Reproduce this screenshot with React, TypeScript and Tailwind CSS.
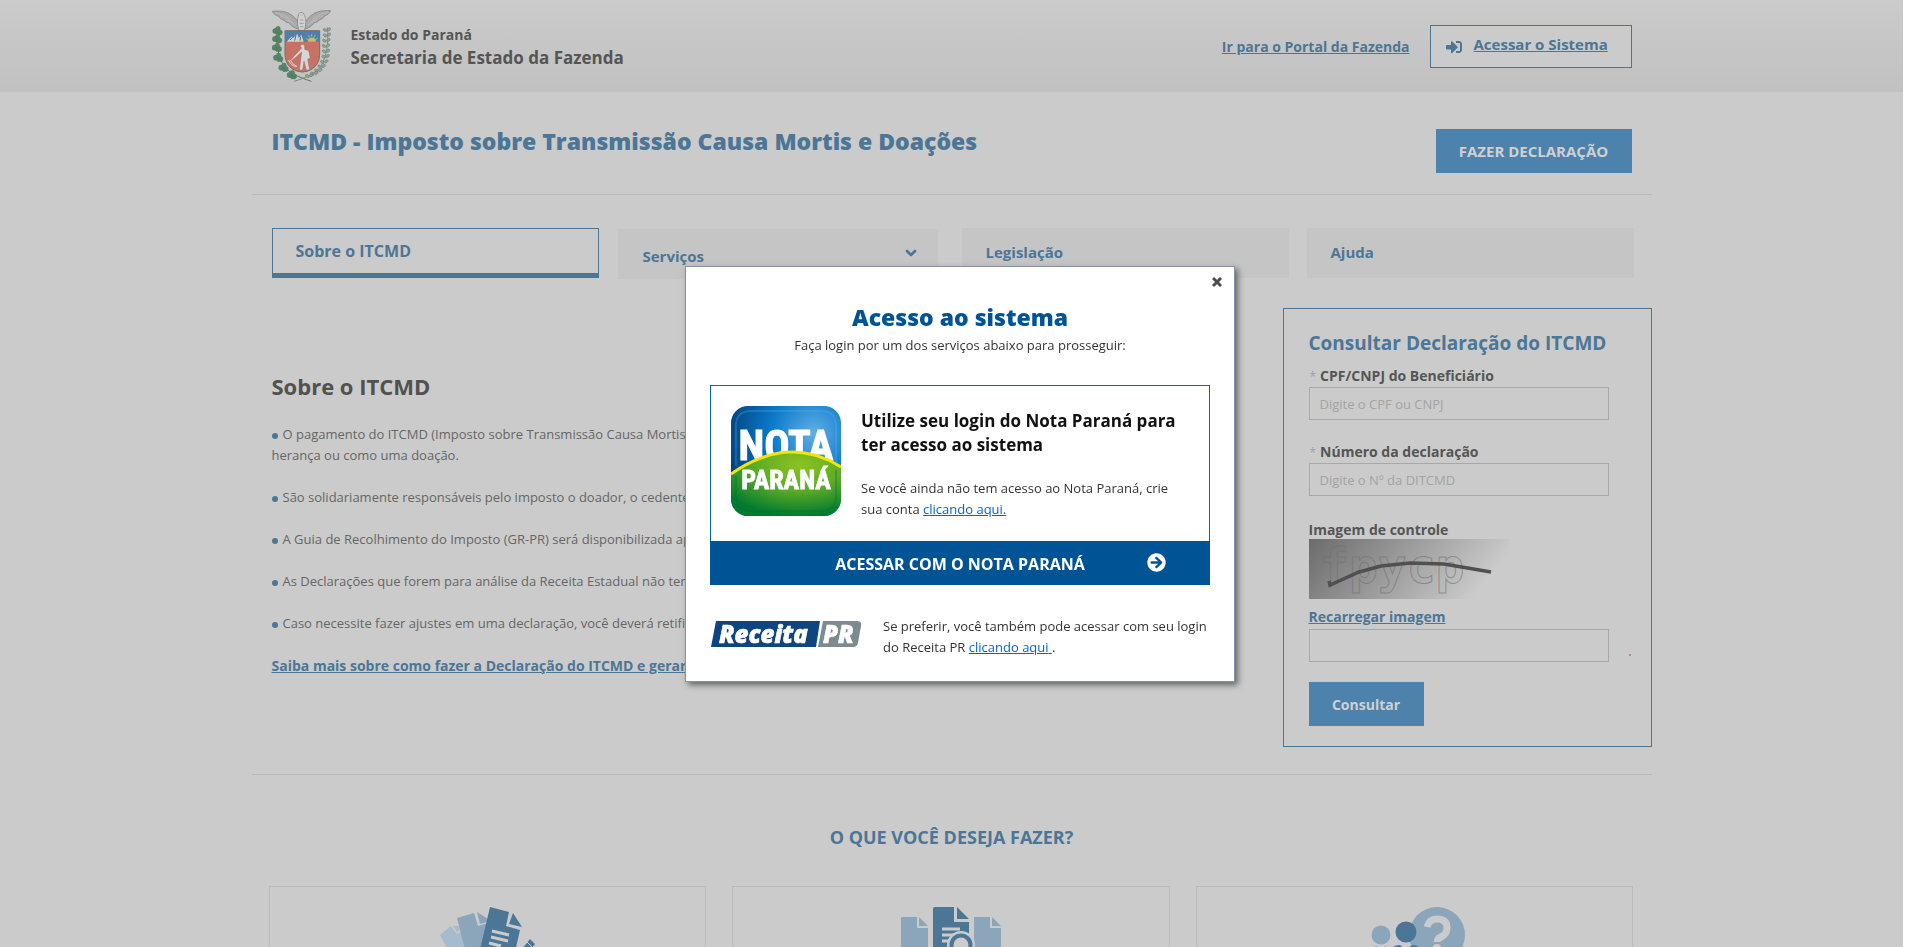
import React from "react";
import { FaArrowCircleRight } from "react-icons/fa";
import { ChevronDown } from "lucide-react";

const tabs = [
  { label: "Sobre o ITCMD", box: "h-[50px] border border-b-[5px] border-[#4c7696] pl-[23px] text-[16px]", menu: false },
  { label: "Serviços", box: "mt-px ml-px mr-1.5 h-[50px] bg-[#c5c5c5] pl-[25px] pr-[19px] pt-1 text-[15px]", menu: true },
  { label: "Legislação", box: "h-[50px] bg-[#c5c5c5] pl-6 pb-0.5 text-[15px]", menu: false },
  { label: "Ajuda", box: "h-[50px] bg-[#c5c5c5] pl-6 pb-0.5 text-[15px]", menu: false },
];

const topics = [
  "São solidariamente responsáveis pelo imposto o doador, o cedente e o donatário.",
  "A Guia de Recolhimento do Imposto (GR-PR) será disponibilizada após a declaração.",
  "As Declarações que forem para análise da Receita Estadual não terão guia imediata.",
  "Caso necessite fazer ajustes em uma declaração, você deverá retificar os dados.",
];

function Crest() {
  const leaves = [
    [17, 62], [16, 86], [15, 112], [19, 142], [35, 172], [60, 194],
  ];
  const coffee = [
    [165, 58], [165, 74], [163, 90], [162, 106], [162, 122], [161, 138], [157, 154], [149, 168], [139, 180], [127, 189], [112, 196],
  ];
  return (
    <svg viewBox="0 0 177 219" className="mt-px h-[73px] w-[59px] shrink-0" role="img" aria-label="Brasão do Paraná">
      <g fill="#a9a9a9" stroke="#7c7c7c" strokeWidth="2">
        <path d="M78 34 C68 22 56 10 40 6 C26 2 12 3 1 4 C5 12 12 17 20 19 C22 25 28 29 36 30 C38 35 44 38 50 38 C56 47 66 54 80 58Z" />
        <path d="M100 34 C110 22 122 10 136 6 C150 2 164 1 176 2 C172 11 165 16 157 18 C155 25 149 29 141 30 C139 35 133 38 127 38 C121 47 111 54 98 58Z" />
        <path d="M79 18 C78 4 96 4 97 16 C103 28 103 44 97 62 H81 C75 44 75 30 79 18Z" fill="#d0d0d0" />
      </g>
      <g fill="none" stroke="#c8c8c8" strokeWidth="1.5">
        <path d="M10 8 Q34 10 56 28 M24 17 Q42 20 62 38 M40 28 Q54 32 72 46" />
        <path d="M167 6 Q144 9 122 28 M153 17 Q136 20 116 38 M137 28 Q124 32 106 46" />
      </g>
      <path d="M85 15 h2 M91 15 h2 M84 30 h10 M83 40 h12 M84 50 h10" stroke="#888" strokeWidth="2" />
      <path d="M19 56 C10 96 18 140 36 168 C52 190 82 202 118 214" fill="none" stroke="#567a64" strokeWidth="3" />
      <path d="M166 52 C170 96 164 140 147 168 C130 190 100 204 66 214" fill="none" stroke="#7c8a80" strokeWidth="3" />
      {leaves.map(([x, y]) => (
        <g key={y} fill="#568568" stroke="#466f57" strokeWidth="1">
          <circle cx={x - 7} cy={y + 1} r="8" />
          <circle cx={x + 6} cy={y + 5} r="8" />
          <circle cx={x + 1} cy={y - 6} r="7" />
          <path d={`M${x - 8} ${y + 5} l8 9 l7 -7z`} />
        </g>
      ))}
      {coffee.map(([x, y]) => (
        <g key={y} fill="#8fa397" stroke="#6a7a70" strokeWidth="1.5">
          <ellipse cx={x - 6} cy={y + 2} rx="6" ry="4" transform={`rotate(35 ${x - 6} ${y + 2})`} />
          <ellipse cx={x + 6} cy={y} rx="6" ry="4" transform={`rotate(-35 ${x + 6} ${y})`} />
        </g>
      ))}
      <path d="M39 62 H143 V132 C143 164 122 184 91 186 C60 184 39 164 39 132Z" fill="#c67264" />
      <path d="M40 63 H142 V95 H40Z" fill="#4c81ac" />
      <path d="M44 95 L58 80 L63 84 L76 72 L80 84 L88 74 L95 95Z" fill="#d3d3d3" />
      <path d="M54 90 l8 -8 M68 92 l4 -16 M84 92 l2 -12" stroke="#666" strokeWidth="3" />
      <path d="M107 95 A12 12 0 0 1 132 95Z" fill="#cdbd62" />
      <path d="M119 72 V80 M108 75 l5 8 M130 75 l-5 8 M101 85 l8 4 M137 85 l-8 4" stroke="#cdbd62" strokeWidth="2.5" />
      <path d="M84 108 q8 -10 14 0 v10 l12 4 l5 22 l-8 4 l6 32 h-10 l-7 -26 l-4 26 h-10 l7 -54 l-22 20 l-3 -5 l25 -27z" fill="#d6d6d6" stroke="#8f6b64" strokeWidth="1.5" />
      <path d="M82 128 L56 152 Q62 164 75 170 Q56 168 50 150" fill="none" stroke="#d6d6d6" strokeWidth="3" />
      <path d="M39 62 H143 V132 C143 164 122 184 91 186 C60 184 39 164 39 132Z" fill="none" stroke="#726f6f" strokeWidth="3" />
    </svg>
  );
}

function SignInIcon() {
  return (
    <svg viewBox="0 0 512 512" fill="currentColor" className="mt-[5px] h-4 w-4" aria-hidden="true">
      <path d="M416 448h-84c-6.6 0-12-5.4-12-12v-40c0-6.6 5.4-12 12-12h84c17.7 0 32-14.3 32-32V160c0-17.7-14.3-32-32-32h-84c-6.6 0-12-5.4-12-12V76c0-6.6 5.4-12 12-12h84c53 0 96 43 96 96v192c0 53-43 96-96 96zm-47-201L201 79c-15-15-41-4.5-41 17v96H24c-13.3 0-24 10.7-24 24v96c0 13.3 10.7 24 24 24h136v96c0 21.5 26 32 41 17l168-168c9.3-9.4 9.3-24.6 0-34z" />
    </svg>
  );
}

function NotaParanaLogo() {
  return (
    <svg viewBox="0 0 110 110" className="h-[110px] w-[110px] shrink-0" role="img" aria-label="Nota Paraná">
      <defs>
        <radialGradient id="sky" cx="0.75" cy="0.25" r="0.85">
          <stop offset="0" stopColor="#63aee6" />
          <stop offset="0.45" stopColor="#0a7bcb" />
          <stop offset="1" stopColor="#023a74" />
        </radialGradient>
        <radialGradient id="field" cx="0.62" cy="0.2" r="0.8">
          <stop offset="0" stopColor="#8dc321" />
          <stop offset="0.5" stopColor="#5dab27" />
          <stop offset="1" stopColor="#017b30" />
        </radialGradient>
        <clipPath id="tile">
          <rect width="110" height="110" rx="17" />
        </clipPath>
      </defs>
      <g clipPath="url(#tile)">
        <rect width="110" height="110" fill="url(#sky)" />
        <path d="M5 60 V20 Q5 5 20 5 H90 Q105 5 105 20 V58" fill="none" stroke="#6bb4e8" strokeOpacity="0.25" strokeWidth="2" />
        <g fill="#fff" stroke="#fff" textAnchor="middle" fontWeight="700" fontFamily="'Roboto Condensed', 'Liberation Sans Narrow', 'Liberation Sans', sans-serif">
          <text x="55" y="54" strokeWidth="1" fontSize="42">NOTA</text>
          <path d="M0 68 Q58 28 110 61 V110 H0Z" fill="url(#field)" stroke="none" />
          <path d="M0 68 Q58 28 110 61" fill="none" stroke="#f6e500" strokeWidth="3" />
          <path d="M5 70 V90 Q5 105 20 105 H90 Q105 105 105 90 V64" fill="none" stroke="#036b2b" strokeOpacity="0.3" strokeWidth="2" />
          <text x="55" y="83" strokeWidth="0.8" fontSize="26">PARANÁ</text>
        </g>
      </g>
    </svg>
  );
}

function ReceitaLogo() {
  return (
    <svg viewBox="0 0 151 28" className="h-7 w-[151px] shrink-0" role="img" aria-label="Receita PR">
      <path d="M5 1 H109 L105 27 H0Z" fill="#0d4580" />
      <path d="M112 1 H146 Q151 1 150 6 L147 23 Q146 27 142 27 H107Z" fill="#7d8b91" />
      <g fill="#fff" stroke="#fff" strokeWidth="0.6" fontStyle="italic" fontWeight="800" fontSize="24" fontFamily="'Open Sans', sans-serif">
        <text x="8" y="23">Receita</text>
        <text x="112" y="23">PR</text>
      </g>
    </svg>
  );
}

function Captcha() {
  return (
    <svg viewBox="0 0 200 60" className="block h-[60px] w-[200px]" role="img" aria-label="Imagem de controle">
      <defs>
        <linearGradient id="fade" x1="0" y1="0" x2="1" y2="0.25">
          <stop offset="0" stopColor="#6b6b6b" />
          <stop offset="1" stopColor="#cbcbcb" />
        </linearGradient>
      </defs>
      <rect width="200" height="60" fill="url(#fade)" />
      <text x="11" y="44" fontSize="48" fontWeight="700" fontFamily="'DejaVu Sans Mono', monospace" fill="none" stroke="#707070" strokeOpacity="0.6">fpycp</text>
      <path d="M20 42 L21 46 L50 33 L72 27 L101 24 L135 25 L182 33" fill="none" stroke="#505050" strokeWidth="3.5" />
    </svg>
  );
}

function DocsPencil() {
  return (
    <svg viewBox="-6 0 106 80" className="h-20 w-[106px]" aria-hidden="true">
      <path d="M0 28 L11 19 L17 27 L24 23 L50 60 L25 75Z" fill="#a6bbcb" />
      <path d="M13 19 L19 19 L20 23 L17 25Z" fill="#a6bbcb" />
      <path d="M17 11 L34 6 L38 19 L48 16 L50 70 L32 70Z" fill="#8ba5bb" />
      <path d="M37 5 L48 12 L47 15 L40 17Z" fill="#8ba5bb" />
      <path d="M50 0 L69 5 L66 19 L80 23 L68 76 L34 68Z" fill="#4c7696" />
      <path d="M73 6 L82 20 L69 17Z" fill="#4c7696" />
      <path d="M52 24 L69 28 M51 30 L68 34 M49 36 L61 39 M48 42 L64 46" stroke="#cbcbcb" strokeWidth="3" />
      <path d="M90 32 L95 37 L66 74 L58 77 L60 69Z" fill="#4c7696" />
      <path d="M87 35 L93 41" stroke="#cbcbcb" strokeWidth="1" />
    </svg>
  );
}

function DocsSearch() {
  return (
    <svg viewBox="0 0 100 80" className="h-20 w-[100px]" aria-hidden="true">
      <path d="M0 11 Q0 10 1 10 H16 V21 H27 V70 H0Z M18 10 L27 19 H18Z" fill="#8ba5bb" />
      <path d="M73 11 Q73 10 74 10 H89 V21 H100 V70 H73Z M91 10 L100 19 H91Z" fill="#8ba5bb" />
      <path d="M32 2 Q32 0 34 0 H53 V15 H68 V70 H32Z M56 0 L68 12 H56Z" fill="#4c7696" />
      <path d="M41 22 H59 M41 28 H53 M41 34 H49" stroke="#cbcbcb" strokeWidth="3" />
      <circle cx="60" cy="38" r="14" fill="#cbcbcb" />
      <circle cx="60" cy="38" r="9.5" fill="#cbcbcb" stroke="#4c7696" strokeWidth="4" />
    </svg>
  );
}

function PeopleQuestion() {
  return (
    <svg viewBox="-6 0 100 80" className="h-20 w-[100px]" aria-hidden="true">
      <circle cx="66" cy="28" r="28" fill="#8ba5bb" />
      <path d="M56 20 Q58 12 66 12 Q76 12 76 21 Q76 27 70 30 Q66 32 66 35" fill="none" stroke="#cbcbcb" strokeWidth="7" />
      <circle cx="66" cy="42" r="5" fill="#cbcbcb" />
      <circle cx="10" cy="28" r="9.5" fill="#8ba5bb" />
      <circle cx="35" cy="25" r="10.5" fill="#4c7696" />
      <path d="M0 64 V46 Q1 39 6 39 L10 43 L14 39 Q18 40 20 44 V64Z" fill="#8ba5bb" />
      <path d="M18 70 V46 Q20 38 29 38 L35 43 L41 38 Q50 38 52 46 V70Z" fill="#4c7696" />
    </svg>
  );
}

function Bullet() {
  return <span className="mr-[5px] inline-block h-1.5 w-1.5 rounded-full bg-[#4c7696]" />;
}

function Field({ id, label, placeholder }: { id: string; label: string; placeholder: string }) {
  return (
    <div>
      <label htmlFor={id} className="block h-[21px] text-[14px] leading-5 font-bold text-[#555]">
        <span className="pr-1 pl-px text-[12px] font-normal text-[#98a4b5]">*</span>
        {label}
      </label>
      <input
        id={id}
        placeholder={placeholder}
        className="block h-[33px] w-[300px] border border-[#a8a8a8] bg-transparent px-2.5 text-[13px] placeholder:text-[#a3a3a3]"
      />
    </div>
  );
}

export default function App() {
  return (
    <div className="h-screen overflow-hidden bg-white pr-[17px] font-['Open_Sans','Noto_Sans',sans-serif] text-[13px]">
      <div className="h-full overflow-hidden bg-[#cbcbcb]">
        <header className="h-[92px] bg-linear-to-b from-[#cbcbcb] to-[#c1c1c1]">
          <div className="mx-auto flex max-w-[1400px] items-start px-5 pt-[9px]">
            <Crest />
            <div className="ml-5 pt-4 font-bold text-[#555]">
              <p className="text-[14px] leading-5">Estado do Paraná</p>
              <p className="text-[17px] leading-[26px]">Secretaria de Estado da Fazenda</p>
            </div>
            <div className="ml-auto flex items-start pt-4">
              <a href="#portal" className="mr-5 pt-3 text-[14px] leading-5 font-bold text-[#4c7696] underline">
                Ir para o Portal da Fazenda
              </a>
              <a
                href="#sistema"
                className="flex h-[43px] w-[202px] items-start gap-3 border border-[#4c7696] bg-[#cbcbcb] pt-2 pl-[15px] text-[15px] leading-5 font-bold text-[#4c7696]"
              >
                <SignInIcon />
                <span className="underline">Acessar o Sistema</span>
              </a>
            </div>
          </div>
        </header>

        <main className="mx-auto max-w-[1400px]">
          <div className="flex h-[103px] items-start justify-between border-b border-[#bababa] px-5 pt-[37px]">
            <h1 className="text-[23px] leading-6 font-extrabold text-[#4c7696]">
              ITCMD - Imposto sobre Transmissão Causa Mortis e Doações
            </h1>
            <button className="h-11 w-[196px] bg-[#4c82ab] text-[15px] font-bold text-[#d0d0d0]">FAZER DECLARAÇÃO</button>
          </div>

          <nav className="grid grid-cols-4 gap-[18px] pt-[33px] pr-[18px] pl-5">
            {tabs.map((tab) => (
              <a
                key={tab.label}
                href="#aba"
                className={`flex items-center justify-between font-bold text-[#4c7696] ${tab.box}`}
              >
                {tab.label}
                {tab.menu && <ChevronDown className="mb-1.5 h-4 w-4" strokeWidth={4} />}
              </a>
            ))}
          </nav>

          <div className="flex items-start justify-between border-b border-[#bababa] pt-[29px] pb-[27px] pl-5">
            <section className="pt-[62px] text-[13px] leading-[21px] text-[#666]">
              <h2 className="mb-[22px] text-[22px] leading-8 font-bold text-[#515151]">Sobre o ITCMD</h2>
              <p className="mb-[21px]">
                <Bullet />
                O pagamento do ITCMD (Imposto sobre Transmissão Causa Mortis e Doações) é devido por bens recebidos como
                <br />
                herança ou como uma doação.
              </p>
              {topics.map((topic) => (
                <p key={topic} className="mb-[21px]">
                  <Bullet />
                  {topic}
                </p>
              ))}
              <a href="#guia" className="text-[14px] font-bold text-[#4c7696] underline">
                Saiba mais sobre como fazer a Declaração do ITCMD e gerar a guia
              </a>
            </section>

            <form className="h-[439px] w-[369px] border border-[#4c7696] pt-5 pl-[25px]" onSubmit={(e) => e.preventDefault()}>
              <h2 className="mb-[9px] text-[19px] leading-7 font-bold text-[#4c7696]">Consultar Declaração do ITCMD</h2>
              <div className="flex flex-col gap-[22px]">
                <Field id="cpf" label="CPF/CNPJ do Beneficiário" placeholder="Digite o CPF ou CNPJ" />
                <Field id="numero" label="Número da declaração" placeholder="Digite o Nº da DITCMD" />
              </div>
              <label htmlFor="codigo" className="mt-6 block text-[14px] leading-[19px] font-bold text-[#555]">
                Imagem de controle
              </label>
              <Captcha />
              <a href="#recarregar" className="mt-2 mb-[2px] block text-[14px] leading-5 font-bold text-[#4c7696] underline">
                Recarregar imagem
              </a>
              <div className="flex items-end">
                <input id="codigo" className="block h-[33px] w-[300px] border border-[#a8a8a8] bg-transparent px-2.5 text-[13px]" />
                <span className="mb-1.5 ml-5 h-0.5 w-0.5 bg-[#cc8080]" />
              </div>
              <button type="submit" className="mt-5 h-11 w-[115px] bg-[#4c82ab] text-[14px] font-bold text-[#d0d0d0]">
                Consultar
              </button>
            </form>
          </div>

          <h2 className="pt-[49px] pb-9 text-center text-[18px] leading-[26px] font-bold text-[#4c7696]">O QUE VOCÊ DESEJA FAZER?</h2>
          <div className="grid grid-cols-3 gap-[26px] pr-[18px] pl-[17px]">
            {[DocsPencil, DocsSearch, PeopleQuestion].map((Icon, i) => (
              <a key={i} href="#servico" className="flex h-60 justify-center border border-[#bababa] pt-5">
                <Icon />
              </a>
            ))}
          </div>
        </main>
      </div>

      <div className="fixed inset-0 flex items-center justify-center">
        <div
          role="dialog"
          aria-labelledby="acesso"
          className="w-[550px] border border-[#8492a6] bg-white px-6 pt-1.5 pb-[23px] text-[#333] shadow-[3px_3px_6px_#666]"
        >
          <div className="flex h-[27px] items-start justify-end">
            <button aria-label="Fechar" className="-mr-4 flex h-[18px] w-[18px] items-center justify-center text-[#4d4d4d]">
              <svg viewBox="0 0 10 10" className="h-2.5 w-2.5" fill="none" stroke="currentColor" strokeWidth="3">
                <path d="M1 1 L9 9 M9 1 L1 9" />
              </svg>
            </button>
          </div>
          <h2 id="acesso" className="text-center text-[23px] leading-[34px] font-extrabold text-[#005395]">
            Acesso ao sistema
          </h2>
          <p className="text-center leading-[22px]">Faça login por um dos serviços abaixo para prosseguir:</p>

          <div className="mt-[29px] flex h-[156px] gap-5 border border-b-0 border-[#0067ad] px-5 pt-5">
            <NotaParanaLogo />
            <div className="pt-[3px]">
              <h3 className="text-[17px] leading-6 font-bold text-[#111]">
                Utilize seu login do Nota Paraná para
                <br />
                ter acesso ao sistema
              </h3>
              <p className="mt-[21px] leading-[21px]">
                Se você ainda não tem acesso ao Nota Paraná, crie
                <br />
                sua conta{" "}
                <a href="#cadastro" className="text-[#0066cc] underline">
                  clicando aqui.
                </a>
              </p>
            </div>
          </div>
          <button className="flex h-11 w-full items-center bg-[#005395] text-[16px] font-bold text-white">
            <span className="flex-1 pt-0.5 pl-[63px] text-center">ACESSAR COM O NOTA PARANÁ</span>
            <FaArrowCircleRight className="mr-11 h-[19px] w-[19px]" />
          </button>

          <div className="mt-7 flex items-start gap-[21px]">
            <div className="pt-[7px] pl-px">
              <ReceitaLogo />
            </div>
            <p className="pt-[3px] leading-[21px]">
              Se preferir, você também pode acessar com seu login
              <br />
              do Receita PR{" "}
              <a href="#receita" className="text-[#0066cc] underline">
                clicando aqui{" "}
              </a>
              .
            </p>
          </div>
        </div>
      </div>
    </div>
  );
}
